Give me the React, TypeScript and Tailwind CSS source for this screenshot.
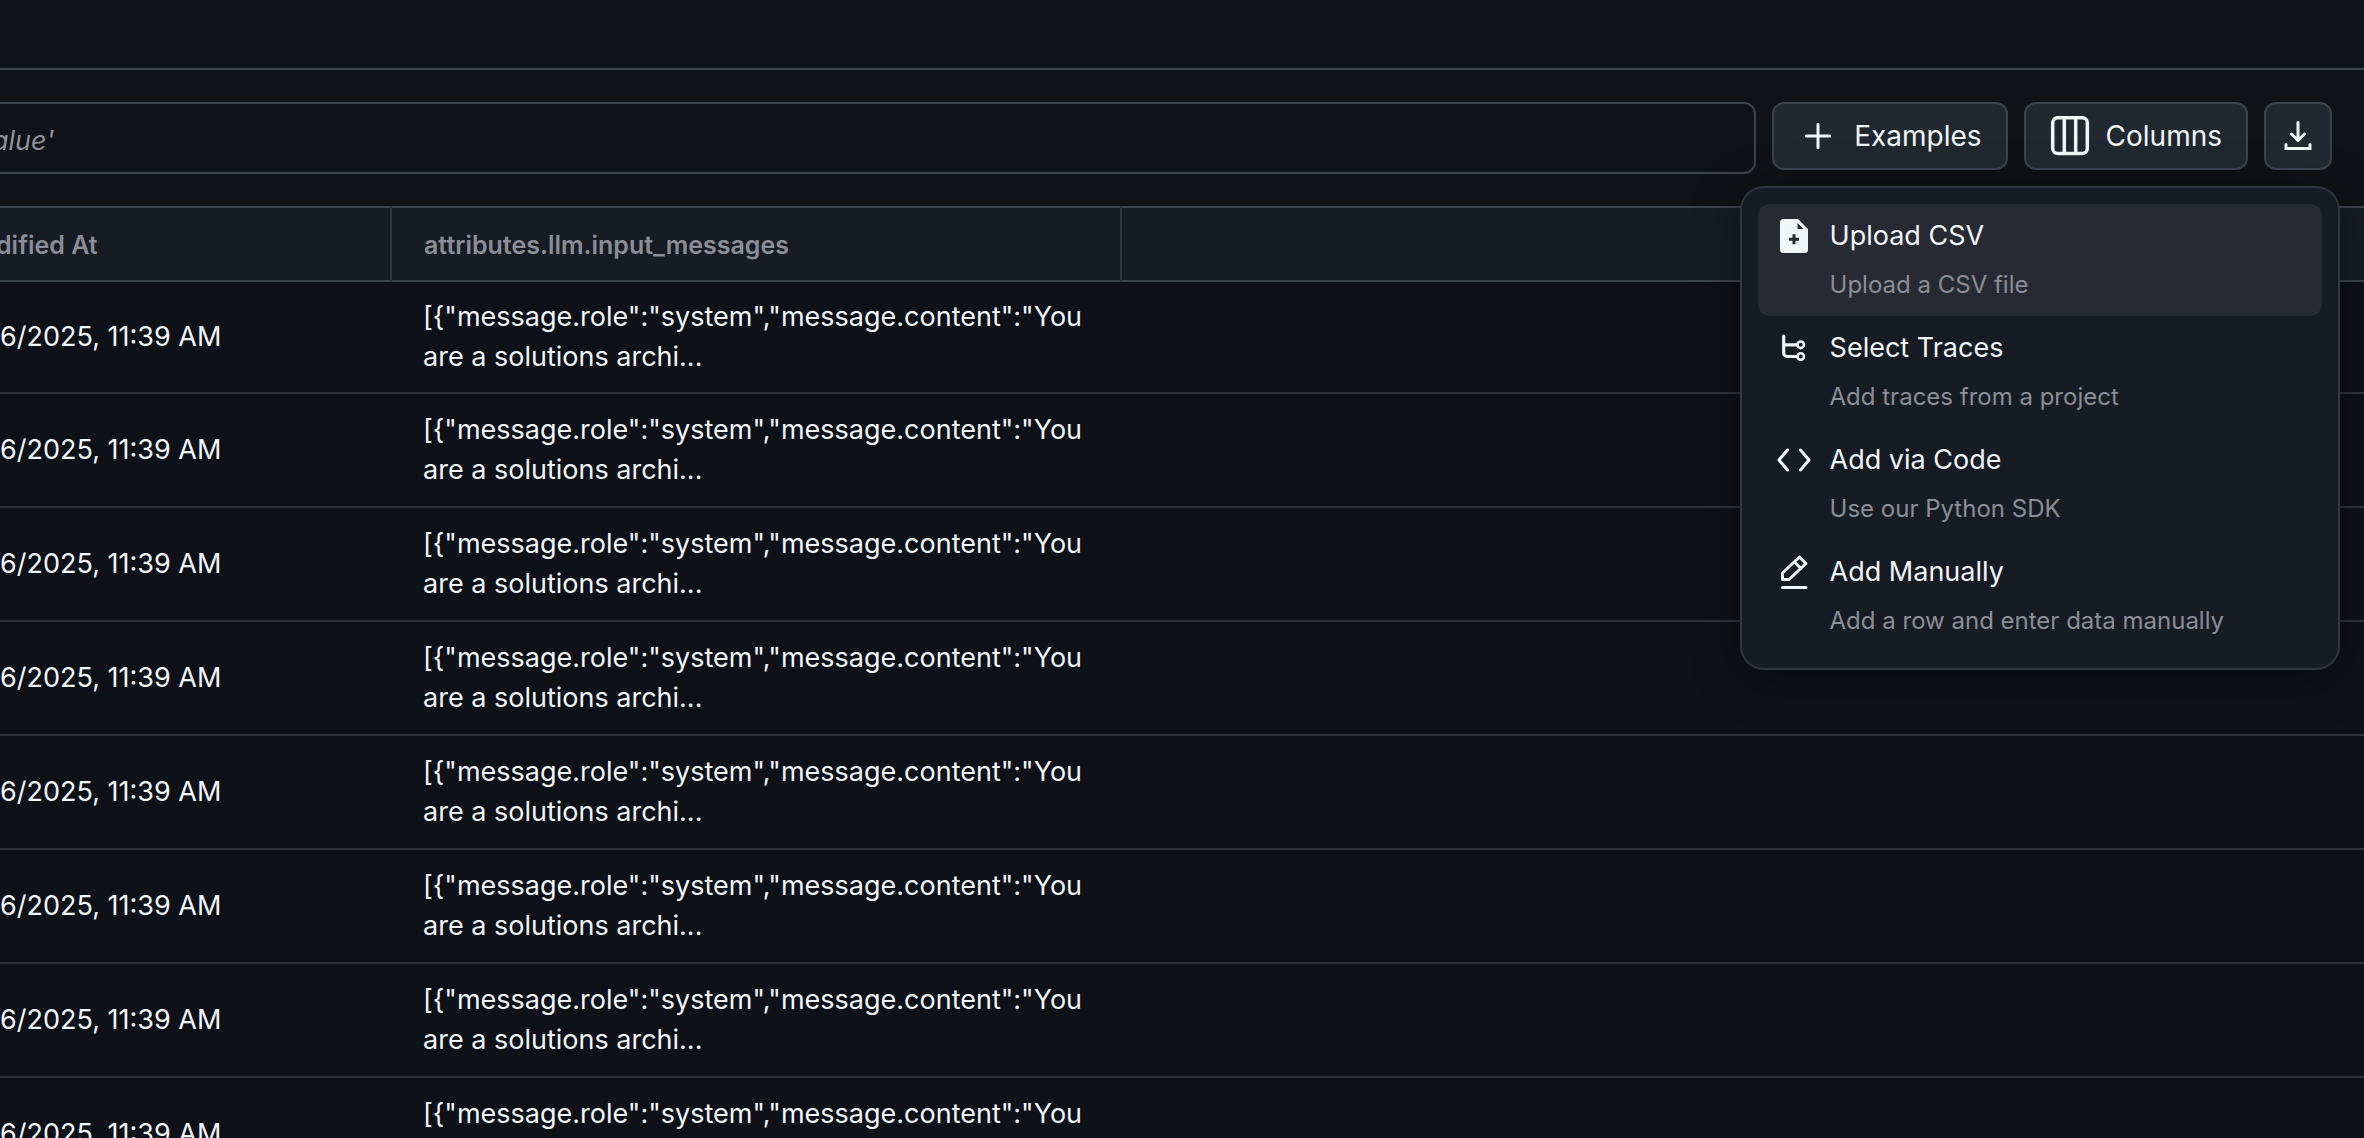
import React from 'react';

interface MenuItem {
  title: string;
  description: string;
  icon: React.ReactNode;
}

const PlusIcon = () => (
  <svg className="h-10 w-10" viewBox="0 0 40 40" fill="none" stroke="currentColor" strokeWidth="3" strokeLinecap="round" aria-hidden="true">
    <path d="M20 8.300v23.400M8.300 20h23.400" />
  </svg>
);

const ColumnsIcon = () => (
  <svg className="h-10 w-10" viewBox="0 0 40 40" fill="none" stroke="currentColor" strokeWidth="3.500" aria-hidden="true">
    <rect x="2.700" y="1.800" width="34.600" height="35.800" rx="5" />
    <path d="M14.300 2v36M25.700 2v36" />
  </svg>
);

const DownloadIcon = () => (
  <svg className="h-10 w-10" viewBox="0 0 40 40" fill="none" stroke="currentColor" strokeWidth="3" strokeLinecap="round" strokeLinejoin="round" aria-hidden="true">
    <path d="M20 6.500v17.500M13.500 18l6.500 6.500 6.500-6.500" />
    <path d="M8 28.500v4h24v-4" strokeLinejoin="miter" />
  </svg>
);

const FileAddIcon = () => (
  <svg className="h-10 w-10" viewBox="0 0 40 40" aria-hidden="true">
    <path
      fill="currentColor"
      fillRule="evenodd"
      d="M9.500 3H24L34 13V33.500A3.500 3.500 0 0 1 30.500 37H9.500A3.500 3.500 0 0 1 6 33.500V6.500A3.500 3.500 0 0 1 9.500 3ZM23.500 7V13H29.500Z
        M18.500 18.300V21.800H15V24.800H18.500V28.300H21.500V24.800H25V21.800H21.500V18.300Z"
    />
  </svg>
);

const TracesIcon = () => (
  <svg className="h-10 w-10" viewBox="0 0 40 40" fill="none" stroke="currentColor" strokeWidth="3.200" strokeLinecap="round" aria-hidden="true">
    <path d="M9.700 8v17a3.500 3.500 0 0 0 3.500 3.500H23M10 16.800h13" />
    <circle cx="26.700" cy="16.800" r="3.300" strokeWidth="2.600" />
    <circle cx="26.700" cy="28.500" r="3.300" strokeWidth="2.600" />
  </svg>
);

const CodeIcon = () => (
  <svg className="h-10 w-10" viewBox="0 0 40 40" fill="none" stroke="currentColor" strokeWidth="3" strokeLinecap="round" strokeLinejoin="round" aria-hidden="true">
    <path d="M13.500 10L5 20l8.500 10M26.500 10L35 20l-8.500 10" />
  </svg>
);

const EditIcon = () => (
  <svg className="h-10 w-10" viewBox="0 0 40 40" fill="none" stroke="currentColor" strokeWidth="3" strokeLinecap="round" strokeLinejoin="round" aria-hidden="true">
    <path d="M8.500 27.500v-6.500L25.500 5l6.500 6.500L15 27.500ZM20.500 10l6.500 6.500M8.500 35.500h23.500" />
  </svg>
);

const menuItems: MenuItem[] = [
  { title: 'Upload CSV', description: 'Upload a CSV file', icon: <FileAddIcon /> },
  { title: 'Select Traces', description: 'Add traces from a project', icon: <TracesIcon /> },
  { title: 'Add via Code', description: 'Use our Python SDK', icon: <CodeIcon /> },
  { title: 'Add Manually', description: 'Add a row and enter data manually', icon: <EditIcon /> },
];

const rows = Array.from({ length: 8 }, (_, id) => ({
  id,
  modifiedAt: '6/2025, 11:39 AM',
  messages: '[{"message.role":"system","message.content":"You are a solutions archi...',
}));

const ExamplesMenu: React.FC = () => (
  <div
    role="menu"
    aria-label="Add examples"
    className="absolute top-full -right-[332px] mt-4 w-[600px] rounded-3xl border-2 border-[#30363f] bg-[#171b23] p-4 shadow-[0_8px_48px_rgba(0,0,0,0.35)]"
  >
    {menuItems.map((item, i) => (
      <button
        key={item.title}
        role="menuitem"
        className={`flex h-28 w-full items-start gap-4 rounded-xl px-4 pt-3 text-left ${i === 0 ? 'bg-[#272a32]' : ''}`}
      >
        {item.icon}
        <span className="flex flex-col">
          <span className="text-[27px] leading-10 text-[#f1f6fb]">{item.title}</span>
          <span className="pt-3 text-2xl leading-[34px] text-[#8b8e97]">{item.description}</span>
        </span>
      </button>
    ))}
  </div>
);

const buttonClass = 'flex h-[68px] items-center rounded-xl border-2 border-[#3d434b] bg-[#22282f] text-[28px]';

export default function App() {
  return (
    <div className="h-screen overflow-hidden bg-[#0f1216] font-['Inter',sans-serif] text-[27px] leading-10 text-[#f1f6fb]">
      <header className="h-[70px] border-b-2 border-[#3d434b]" />

      {/* Filter bar */}
      <div className="flex items-start gap-4 py-8 pr-8">
        <input
          aria-label="Filter"
          placeholder="alue'"
          className="h-[72px] min-w-0 flex-1 rounded-r-xl border-2 border-l-0 border-[#3d434b] bg-transparent pt-1 -indent-2 placeholder:text-[#8f9298] placeholder:italic"
        />
        <div className="relative">
          <button className={`${buttonClass} gap-4 px-6`} aria-haspopup="menu" aria-expanded="true">
            <PlusIcon />
            Examples
          </button>
          <ExamplesMenu />
        </div>
        <button className={`${buttonClass} gap-4 px-6`}>
          <ColumnsIcon />
          Columns
        </button>
        <button className={`${buttonClass} w-[68px] justify-center`} aria-label="Download">
          <DownloadIcon />
        </button>
      </div>

      <table className="w-full table-fixed border-collapse bg-[#0e1118]">
        <thead>
          <tr className="h-[74px] border-t-2 border-[#3d434b] bg-[#171b23] text-left text-[25px] text-[#8b8e97]">
            <th className="w-[391px] border-r-2 border-[#30343c] pt-0.5 -indent-1 font-semibold">dified At</th>
            <th className="w-[730px] border-r-2 border-[#30343c] pt-0.5 pl-8 font-semibold">attributes.llm.input_messages</th>
            <th aria-label="Actions" />
          </tr>
        </thead>
        <tbody>
          {rows.map((row, i) => (
            <tr
              key={row.id}
              className={`border-b-2 border-[#2e323a] ${i === 0 ? 'h-28 border-t-2 border-t-[#3d434b]' : 'h-[114px]'}`}
            >
              <td>{row.modifiedAt}</td>
              <td className="pr-6 pl-8">{row.messages}</td>
              <td />
            </tr>
          ))}
        </tbody>
      </table>
    </div>
  );
}
